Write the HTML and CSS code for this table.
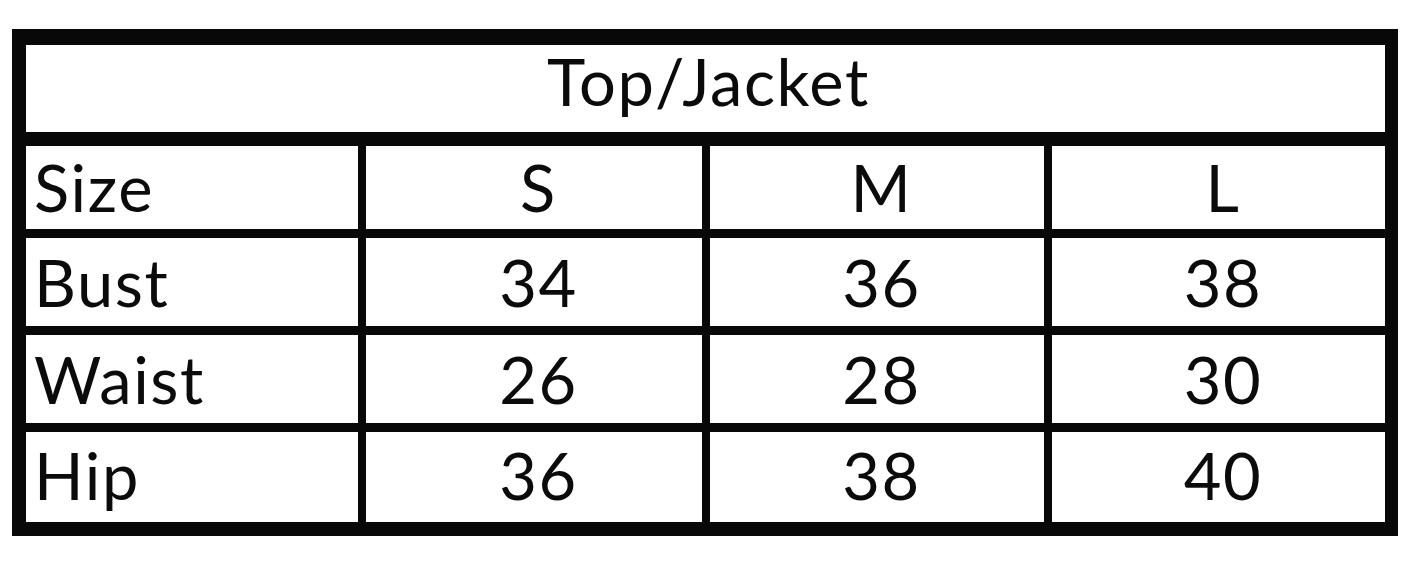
FILE: index.html
```html
<!DOCTYPE html>
<html lang="en">
<head>
<meta charset="utf-8">
<title>Top/Jacket Size Chart</title>
<link rel="stylesheet" href="styles.css">
</head>
<body>
<div class="chart">
  <div class="title">Top/Jacket</div>
  <div class="grid">
    <div class="cell label">Size</div>
    <div class="cell value">S</div>
    <div class="cell value">M</div>
    <div class="cell value">L</div>

    <div class="cell label">Bust</div>
    <div class="cell value">34</div>
    <div class="cell value">36</div>
    <div class="cell value">38</div>

    <div class="cell label">Waist</div>
    <div class="cell value">26</div>
    <div class="cell value">28</div>
    <div class="cell value">30</div>

    <div class="cell label last">Hip</div>
    <div class="cell value last">36</div>
    <div class="cell value last">38</div>
    <div class="cell value last">40</div>
  </div>
</div>
</body>
</html>
```

FILE: styles.css
```css
html, body {
  margin: 0;
  padding: 0;
  background: #ffffff;
}

body {
  font-family: "Lato", "Open Sans", sans-serif;
  color: #0b0b0b;
}

.chart {
  margin: 29px 0 0 12px;
  width: 1386px;
  box-sizing: border-box;
  background: #080808;
  padding: 16px 13px 14px 14px;
  display: flex;
  flex-direction: column;
  gap: 14px;
}

.title {
  background: #ffffff;
  height: 87px;
  box-sizing: border-box;
  padding: 0 0 14px 6px;
  display: flex;
  align-items: center;
  justify-content: center;
  font-size: 65px;
  line-height: 1;
  letter-spacing: 1.6px;
}

.grid {
  display: grid;
  grid-template-columns: 332px 336px 334px 333px;
  grid-template-rows: 83px 88px 88px 90px;
  column-gap: 8px;
  row-gap: 9px;
}

.cell {
  background: #ffffff;
  display: flex;
  align-items: center;
  font-size: 65px;
  line-height: 1;
  letter-spacing: 1.6px;
  box-sizing: border-box;
}

.label {
  justify-content: flex-start;
  padding-left: 8px;
}

.value {
  justify-content: center;
  padding-left: 9px;
}

.last {
  padding-bottom: 4px;
}
```
